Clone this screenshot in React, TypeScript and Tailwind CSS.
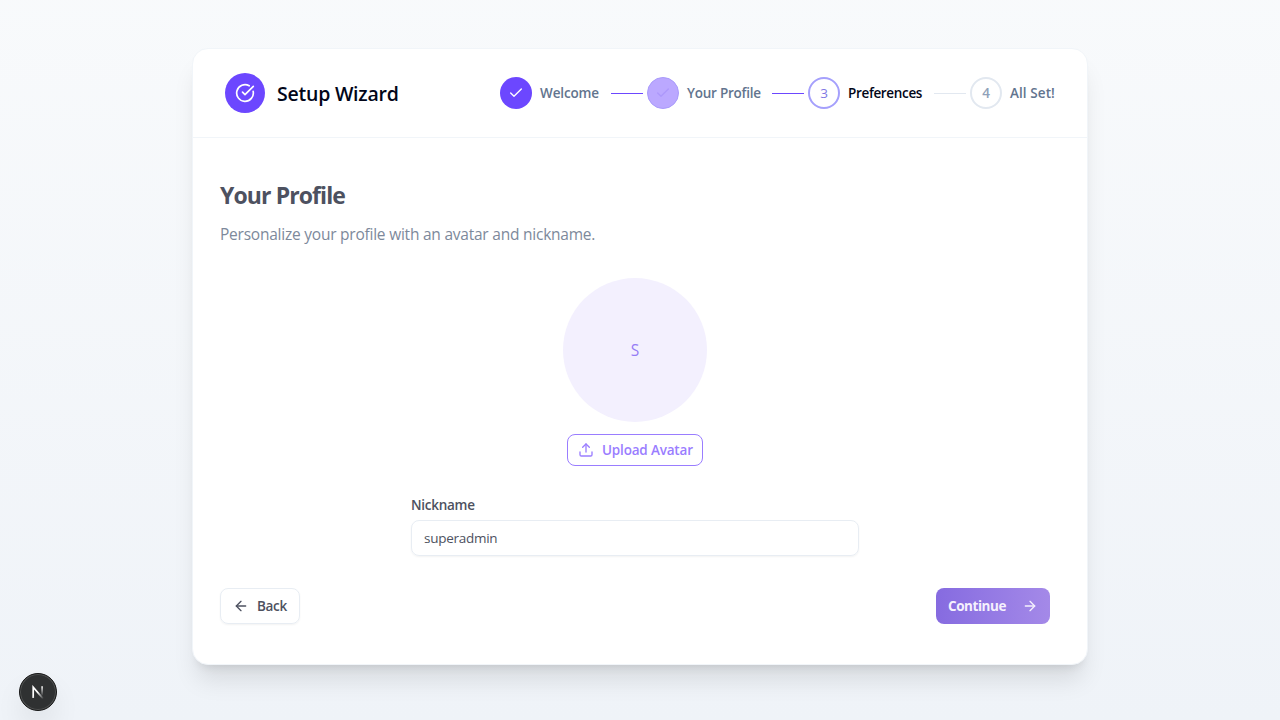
import { ArrowLeft, ArrowRight, Check, CircleCheckBig, Upload } from "lucide-react";

function Line({ done }: { done: boolean }) {
  return <div className={done ? "ml-3 mr-1 h-px w-8 bg-[#6c47ff]" : "ml-3 mr-1 h-px w-8 bg-slate-200"} />;
}

function Steps() {
  return (
    <div className="flex items-center text-[13.5px] font-semibold whitespace-nowrap text-slate-500">
      <div className="flex size-8 items-center justify-center rounded-full bg-[#6c47ff] text-white">
        <Check size={16} strokeWidth={2} />
      </div>
      <span className="ml-2 w-[59px] tracking-[-0.13px]">Welcome</span>
      <Line done />
      <div className="flex size-8 items-center justify-center rounded-full border border-[#a99bfb] bg-[#bba8ff] text-[#ad98fb]">
        <Check size={16} strokeWidth={2} />
      </div>
      <span className="ml-2 w-[73px] tracking-[-0.24px]">Your Profile</span>
      <Line done />
      <div className="flex size-8 items-center justify-center rounded-full border-2 border-[#a5a0fc] font-medium text-[#8279e4]">3</div>
      <span className="ml-2 w-[74px] tracking-[-0.34px] text-slate-950">Preferences</span>
      <Line done={false} />
      <div className="flex size-8 items-center justify-center rounded-full border-2 border-slate-200 text-slate-400">4</div>
      <span className="ml-2 w-[45px] tracking-[0.08px]">All Set!</span>
    </div>
  );
}

export default function App() {
  return (
    <main className="relative flex h-screen flex-col items-center overflow-hidden bg-linear-to-b from-slate-50 to-[#eff3f8] pt-12 font-['Open_Sans','Noto_Sans',sans-serif]">
      <section className="h-[617px] w-[896px] rounded-2xl border border-slate-100 bg-white shadow-[0_20px_25px_-5px_rgba(0,0,0,0.1),0_8px_10px_-6px_rgba(0,0,0,0.1)]">
        <header className="flex h-[89px] items-center justify-between border-b border-slate-100 px-8">
          <div className="flex items-center gap-3">
            <div className="flex size-10 items-center justify-center rounded-full bg-[#6c47ff] text-white">
              <CircleCheckBig size={20} />
            </div>
            <h1 className="pt-0.5 text-[19.5px] leading-7 font-semibold tracking-[-0.23px] text-slate-950">Setup Wizard</h1>
          </div>
          <Steps />
        </header>
        <div className="flex flex-col pr-[37px] pl-[27px] pt-[41px] text-[#4d5160]">
          <h2 className="text-[23px] leading-8 font-bold tracking-[-0.9px]">Your Profile</h2>
          <p className="mt-[11px] text-[15.5px] leading-6 tracking-[-0.23px] text-[#7d899b]">Personalize your profile with an avatar and nickname.</p>
          <div className="mt-8 flex flex-col items-center">
            <div className="flex size-36 items-center justify-center rounded-full bg-[#f3f0fe] pt-px text-[15.5px] text-[#967df5]">S</div>
            <button className="mt-3 flex h-8 w-[136px] items-center rounded-lg border border-[#9a7dff] pl-2.5 text-[13.5px] font-semibold tracking-[-0.18px] whitespace-nowrap text-[#9a7dff]">
              <Upload size={16} className="mr-2 shrink-0" />
              Upload Avatar
            </button>
          </div>
          <div className="mx-auto mt-[29px] flex w-[448px] flex-col">
            <label htmlFor="nickname" className="text-[13.5px] leading-5 font-semibold tracking-[-0.27px]">Nickname</label>
            <input id="nickname" defaultValue="superadmin" className="mt-[5px] h-9 rounded-lg border border-slate-200/80 px-3 text-[13.5px] tracking-[-0.27px] shadow-xs outline-none" />
          </div>
          <div className="mt-8 flex justify-between text-[13.5px] font-semibold">
            <button className="flex h-9 w-20 items-center rounded-lg border border-slate-200/80 pl-3 tracking-[-0.35px] shadow-xs">
              <ArrowLeft size={16} className="mr-2" />
              Back
            </button>
            <button className="flex h-9 w-[114px] items-center justify-between rounded-lg bg-linear-to-r from-[#866be0] to-[#a489e8] px-3 font-bold tracking-[-0.45px] text-[#f5f1fd]">
              Continue
              <ArrowRight size={16} />
            </button>
          </div>
        </div>
      </section>
      <div className="absolute top-[673px] left-[19px] flex size-[38px] items-center justify-center rounded-full border border-[#171717] bg-[#2f3132] shadow-[inset_0_0_0_1px_#505252,0_16px_32px_-8px_rgba(0,0,0,0.2)]">
        <svg width="14" height="14" viewBox="0 0 14 14" fill="none">
          <defs>
            <linearGradient id="stem" x1="0" y1="1" x2="0" y2="11" gradientUnits="userSpaceOnUse">
              <stop stopColor="#fff" />
              <stop offset="1" stopColor="#fff" stopOpacity="0" />
            </linearGradient>
            <linearGradient id="diagonal" x1="7" y1="7" x2="12" y2="13" gradientUnits="userSpaceOnUse">
              <stop stopColor="#fff" />
              <stop offset="1" stopColor="#fff" stopOpacity="0.1" />
            </linearGradient>
          </defs>
          <path d="M2.2 13V2.2L12 13.6" stroke="url(#diagonal)" strokeWidth="1.7" />
          <path d="M11.1 1.2V10.5" stroke="url(#stem)" strokeWidth="1.6" />
        </svg>
      </div>
    </main>
  );
}
